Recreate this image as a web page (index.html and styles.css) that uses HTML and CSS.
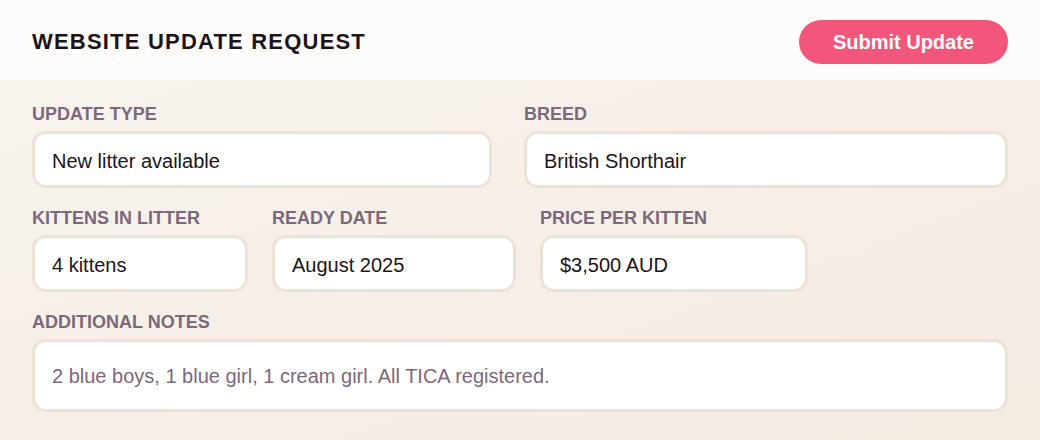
FILE: index.html
```html
<!DOCTYPE html>
<html lang="en">
<head>
<meta charset="utf-8">
<title>Website Update Request</title>
<link rel="stylesheet" href="styles.css">
</head>
<body>
<div class="panel">
  <header class="header">
    <h1 class="title">WEBSITE UPDATE REQUEST</h1>
    <button class="submit" type="button">Submit Update</button>
  </header>
  <main class="form">
    <div class="row row-two">
      <div class="field">
        <div class="label">UPDATE TYPE</div>
        <div class="input">New litter available</div>
      </div>
      <div class="field">
        <div class="label">BREED</div>
        <div class="input">British Shorthair</div>
      </div>
    </div>
    <div class="row row-three">
      <div class="field">
        <div class="label">KITTENS IN LITTER</div>
        <div class="input">4 kittens</div>
      </div>
      <div class="field">
        <div class="label">READY DATE</div>
        <div class="input">August 2025</div>
      </div>
      <div class="field">
        <div class="label">PRICE PER KITTEN</div>
        <div class="input">$3,500 AUD</div>
      </div>
    </div>
    <div class="row">
      <div class="field">
        <div class="label">ADDITIONAL NOTES</div>
        <div class="input notes">2 blue boys, 1 blue girl, 1 cream girl. All TICA registered.</div>
      </div>
    </div>
  </main>
</div>
</body>
</html>
```
FILE: styles.css
```css
* { box-sizing: border-box; }

html, body {
  margin: 0;
  padding: 0;
  height: 100%;
}

body {
  font-family: "Liberation Sans", Arial, sans-serif;
  background: linear-gradient(160deg, #f9f4ef 0%, #f4ebe3 100%);
  color: #1d1418;
}

.panel {
  display: flex;
  flex-direction: column;
  min-height: 100%;
}

.header {
  height: 80px;
  background: #fefcfb;
  display: flex;
  align-items: center;
  justify-content: space-between;
  padding: 4px 32px 0;
}

.title {
  margin: 0;
  font-size: 22px;
  font-weight: 700;
  letter-spacing: 1.2px;
  color: #1d1418;
  line-height: 26px;
}

.submit {
  font-family: "Liberation Sans", Arial, sans-serif;
  font-size: 20px;
  font-weight: 700;
  color: #ffffff;
  background: #f3567b;
  border: none;
  border-radius: 22px;
  height: 44px;
  padding: 0 34px;
  line-height: 23px;
}

.form {
  padding: 24px 32px 28px;
  display: flex;
  flex-direction: column;
  gap: 20px;
}

.row {
  display: grid;
  grid-template-columns: 1fr;
}

.row-two {
  grid-template-columns: 19fr 20fr;
  column-gap: 32px;
}

.row-three {
  grid-template-columns: 216px 244px 268px;
  column-gap: 24px;
}

.field {
  display: flex;
  flex-direction: column;
  gap: 6px;
}

.label {
  font-size: 18px;
  font-weight: 700;
  line-height: 21px;
  color: #7c687c;
}

.input {
  background: #ffffff;
  border: 3px solid #ede2d8;
  border-radius: 14px;
  padding: 16px 17px 12px;
  font-size: 20px;
  line-height: 23px;
  color: #1d1418;
}

.notes {
  padding: 23px 17px 21px;
  color: #7c687e;
}
```
